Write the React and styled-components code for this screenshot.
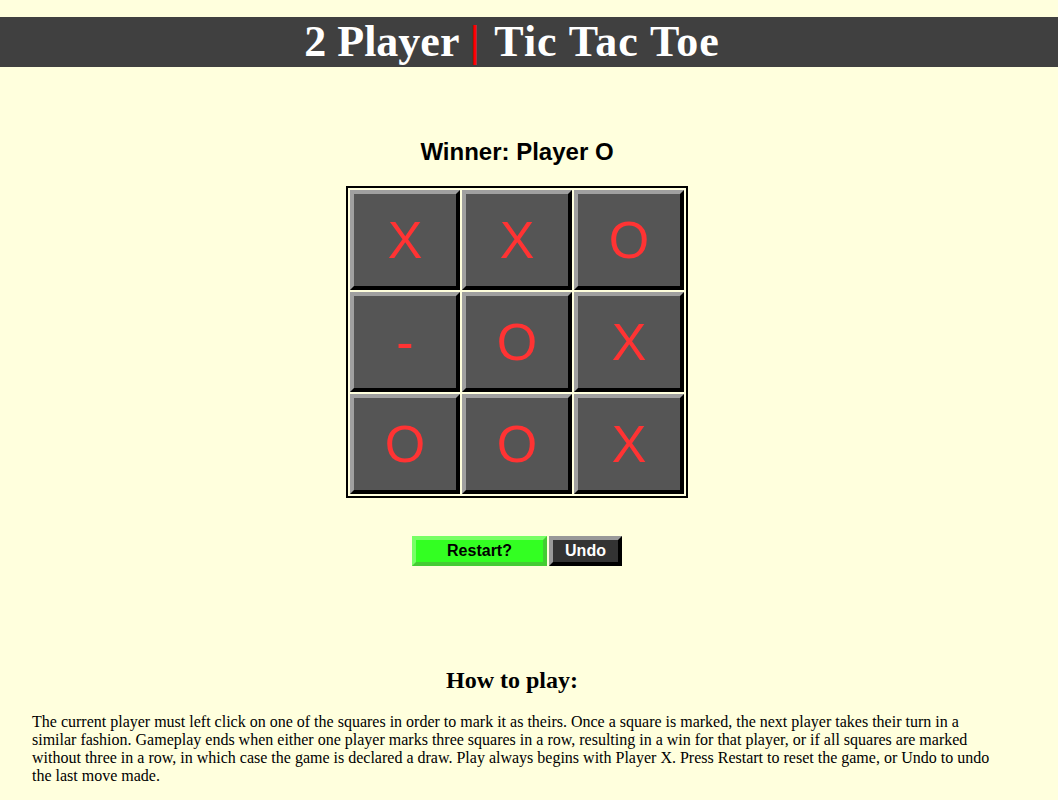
import React, { useState } from 'react'
import styled, { createGlobalStyle } from 'styled-components'

const Global = createGlobalStyle`
body{
  margin:0;
  background:#ffffdd;
  font-family:"Liberation Serif", "Times New Roman", serif;
}
`
const Header = styled.h1`
margin:17px 0 0 0;
padding:0 34px 0 0;
height:50px;
background:#404040;
color:white;
text-align:center;
font-family:"Liberation Serif", serif;
font-weight:bold;
font-size:44px;
line-height:50px;
`
const Bar = styled.span`
color:#ff0000;
font-weight:bold;
margin:0 4px 0 0;
`
const Title = styled.span`
letter-spacing:1px;
`
const Main = styled.div`
padding:0 24px 0 0;
display:flex;
flex-direction:column;
align-items:center;
`
const Status = styled.div`
margin-top:71px;
font-family:"Liberation Sans", Arial, sans-serif;
font-weight:bold;
font-size:24px;
line-height:28px;
color:black;
`
const Board = styled.div`
margin-top:20px;
border:2px solid black;
padding:2px;
display:grid;
grid-template-columns:repeat(3, 110px);
grid-auto-rows:100px;
gap:2px;
`
const Cell = styled.button`
box-sizing:border-box;
background:#555555;
border:4px solid;
border-color:#a0a0a0 #000 #000 #a0a0a0;
color:#ff3333;
font-family:"Liberation Sans", Arial, sans-serif;
font-size:52px;
display:flex;
align-items:center;
justify-content:center;
padding:0;
cursor:pointer;
`
const Controls = styled.div`
margin-top:38px;
display:flex;
gap:2px;
`
const Button = styled.button`
box-sizing:border-box;
height:30px;
width:${p => p.w}px;
border:4px solid;
border-color:${p => p.green ? '#77ff66 #44cc33 #44cc33 #77ff66' : '#999 #000 #000 #999'};
background:${p => p.green ? '#33ff22' : '#333333'};
color:${p => p.green ? 'black' : 'white'};
font-family:"Liberation Sans", Arial, sans-serif;
font-weight:bold;
font-size:16px;
padding:0;
cursor:pointer;
`
const HowTo = styled.h2`
margin:100px 0 0 0;
padding:0 34px 0 0;
text-align:center;
font-size:24px;
line-height:28px;
`
const Text = styled.p`
margin:19px 56px 0 32px;
font-size:16px;
line-height:18px;
`

const start = ['X', 'X', 'O', '-', 'O', 'X', 'O', 'O', 'X']

export default function App() {
    const [squares, setSquares] = useState(start)

    return (
        <div>
            <Global />
            <Header>2 Player <Bar>|</Bar> <Title>Tic Tac Toe</Title></Header>
            <Main>
                <Status>Winner: Player O</Status>
                <Board>
                    {squares.map((s, i) => <Cell key={i}>{s}</Cell>)}
                </Board>
                <Controls>
                    <Button green w={135} onClick={() => setSquares(Array(9).fill('-'))}>Restart?</Button>
                    <Button w={73}>Undo</Button>
                </Controls>
            </Main>
            <HowTo>How to play:</HowTo>
            <Text>
                The current player must left click on one of the squares in order to mark it as theirs. Once a square is marked, the next player takes their turn in a similar fashion. Gameplay ends when either one player marks three squares in a row, resulting in a win for that player, or if all squares are marked without three in a row, in which case the game is declared a draw. Play always begins with Player X. Press Restart to reset the game, or Undo to undo the last move made.
            </Text>
        </div>
    )
}
